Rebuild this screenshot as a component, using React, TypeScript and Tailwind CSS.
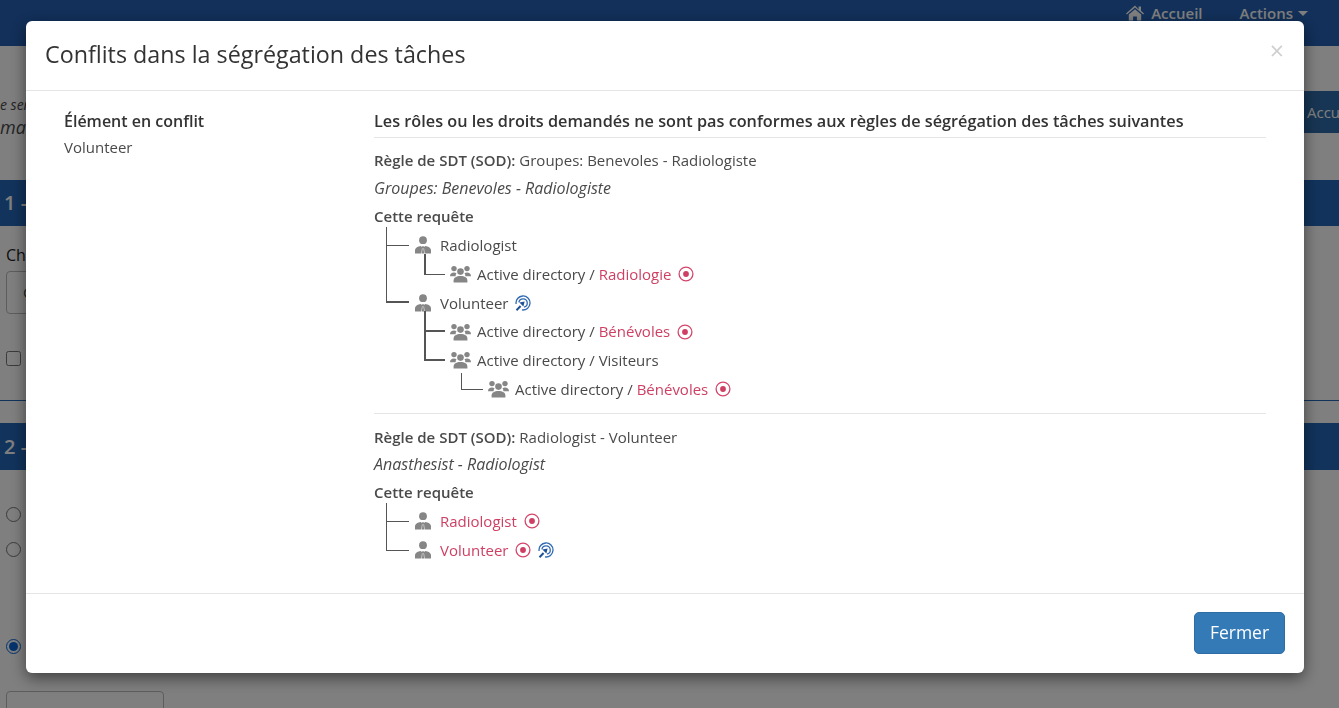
import React from 'react';

const PersonIcon = () => (
  <svg viewBox="0 0 16 18" className="w-[16px] h-[18px] shrink-0" fill="#868686">
    <circle cx="8" cy="4.2" r="3.9" />
    <path d="M0 17.5v-3.2c0-2 1.6-3.4 3.6-3.9l1.9-.5 1.6 1.2-.7 6.4H0z" />
    <path d="M16 17.5v-3.2c0-2-1.6-3.4-3.6-3.9l-1.9-.5-1.6 1.2.7 6.4H16z" />
    <path d="M7.2 10.2h1.6l.3 1.3-.5 1 .5 5h-2.2l.5-5-.5-1z" />
  </svg>
);

const GroupIcon = () => (
  <svg viewBox="0 0 21 18" className="w-[21px] h-[18px] shrink-0" fill="#868686">
    <circle cx="4" cy="3.6" r="2.7" />
    <circle cx="17" cy="3.6" r="2.7" />
    <circle cx="10.5" cy="6.6" r="3.3" />
    <path d="M0 11.2c0-2.4 1.6-3.7 4-3.7 1 0 1.8.2 2.5.7-.6.8-.9 1.7-.9 3H0z" />
    <path d="M21 11.2c0-2.4-1.6-3.7-4-3.7-1 0-1.8.2-2.5.7.6.8.9 1.7.9 3H21z" />
    <path d="M3.6 17.6v-2c0-3 2.8-4.6 6.9-4.6s6.9 1.6 6.9 4.6v2z" />
  </svg>
);

const TargetIcon = () => (
  <svg viewBox="0 0 16 16" className="w-[16px] h-[16px] shrink-0">
    <circle cx="8" cy="8" r="6.9" fill="none" stroke="#d5446a" strokeWidth="1.3" />
    <circle cx="8" cy="8" r="2.9" fill="#cf3f63" />
  </svg>
);

const ScopeIcon = () => (
  <svg viewBox="0 0 16 16" className="w-[16px] h-[16px] shrink-0" fill="none">
    <path d="M1.1 9A7 7 0 1 1 7 14.9" stroke="#2f69b3" strokeWidth="1.3" />
    <path d="M3.9 7.400A4.200 4.200 0 1 1 9 12.100" stroke="#2f69b3" strokeWidth="1.300" />
    <path d="M1.500 15.200 5.600 11" stroke="#1f5196" strokeWidth="2" />
    <path d="M9.600 6.400 4.400 7.600 8.400 11.600z" fill="#1f5196" />
  </svg>
);

const HomeIcon = () => (
  <svg viewBox="0 0 18 16" className="w-[18px] h-[16px]" fill="#ffffff">
    <path d="M9 .6 0 8.400l.9 1L9 2.600l8.100 6.800.9-1-3-2.600V1.500h-2.400v3.100z" />
    <path d="M2.800 9.400 9 4.200l6.200 5.200v6.200h-4.300v-4.200H7.100v4.200H2.800z" />
  </svg>
);

const Red = ({ children }: { children: React.ReactNode }) => (
  <span className="text-[#cf3f63]">{children}</span>
);

type RowProps = {
  pad: string;
  line: string;
  group?: boolean;
  children: React.ReactNode;
};

// line = classes of the elbow connector drawn to the left of the icon
const TreeRow = ({ pad, line, group, children }: RowProps) => (
  <div className={`relative h-[28.75px] flex items-center ${pad}`}>
    <span className={`absolute border-[#555] ${line}`} />
    {group ? <GroupIcon /> : <PersonIcon />}
    <span className={`flex items-center gap-[7px] whitespace-nowrap ${group ? 'ml-[6px]' : 'ml-[9px]'}`}>
      {children}
    </span>
  </div>
);

const Heading = ({ children }: { children: React.ReactNode }) => (
  <div className="font-semibold leading-[20px]">{children}</div>
);

export default function App() {
  return (
    <div className="relative h-screen overflow-hidden bg-white text-[15px] text-[#4a4a4a]" style={{ fontFamily: '"Open Sans", sans-serif' }}>
      {/* ——— Page behind the dialog ——— */}
      <div className="h-[46px] bg-[#2460b4] flex items-start justify-end pt-[3px] pr-[31px] font-semibold text-white">
        <div className="flex items-center gap-[7px] leading-[20px] mr-[37px]">
          <HomeIcon />
          Accueil
        </div>
        <div className="flex items-center gap-[5px] leading-[20px]">
          Actions
          <span className="w-0 h-0 border-x-[5px] border-x-transparent border-t-[5px] border-t-white" />
        </div>
      </div>

      <div className="flex justify-between pt-[45px] h-[134px]">
        <div className="italic whitespace-nowrap pt-[4px]">
          <div className="text-[14px] leading-[20px]">e service</div>
          <div className="text-[18px] leading-[24px]">mande</div>
        </div>
        <div className="h-[42px] w-[36px] bg-[#2f6ba8] text-white leading-[42px] pl-[4px] whitespace-nowrap shrink-0">
          Accu
        </div>
      </div>

      <div className="h-[46px] bg-[#2466b8] text-white text-[20px] font-semibold leading-[46px] pl-[4px]">1 - Demande</div>
      <div className="px-[6px] h-[175px] border-b border-[#2466b8]">
        <div className="pt-[18px] text-[16px] leading-[22px] font-medium text-[#222]">Choisir</div>
        <div className="mt-[5px] w-[158px] h-[43px] border border-[#bbb] rounded-[4px] pl-[16px] leading-[41px]">Choix</div>
        <input type="checkbox" className="block mt-[37px] w-[15px] h-[15px]" readOnly />
      </div>

      <div className="mt-[22px] h-[47px] bg-[#2466b8] text-white text-[20px] font-semibold leading-[47px] pl-[4px]">2 - Options</div>
      <div className="px-[6px]">
        <input type="radio" className="block mt-[37px] w-[15px] h-[15px]" readOnly />
        <input type="radio" className="block mt-[20px] w-[15px] h-[15px]" readOnly />
        <input type="radio" checked className="block mt-[82px] w-[15px] h-[15px] accent-[#0a66d8]" readOnly />
        <div className="mt-[37px] w-[158px] h-[43px] border border-[#bbb] rounded-[4px]" />
      </div>

      {/* ——— Backdrop ——— */}
      <div className="fixed inset-0 bg-black/50" />

      {/* ——— Dialog ——— */}
      <div className="fixed left-[26px] top-[21px] w-[1278px] h-[652px] flex flex-col bg-white rounded-[6px] shadow-[0_5px_15px_rgba(0,0,0,0.5)]">
        <div className="h-[70px] shrink-0 flex items-center justify-between pl-[19px] pr-[20px] pb-[3px] border-b border-[#e5e5e5]">
          <h4 className="text-[23.3px] font-medium leading-[30px] text-[#333]">Conflits dans la ségrégation des tâches</h4>
          <span className="text-[25px] font-normal leading-none text-[#cfcfcf] -mt-[8px]">×</span>
        </div>

        <div className="flex-1 flex pl-[38px] pr-[38px] pt-[19px]">
          <div className="w-[310px] shrink-0">
            <div className="text-[16px] font-semibold leading-[22px] text-[#333]">Élément en conflit</div>
            <div className="mt-[5px] leading-[20px]">Volunteer</div>
          </div>

          <div className="flex-1">
            <div className="text-[16.25px] font-semibold leading-[22px] pb-[5px] border-b border-[#e5e5e5] text-[#333]">
              Les rôles ou les droits demandés ne sont pas conformes aux règles de ségrégation des tâches suivantes
            </div>

            <div className="mt-[12px] leading-[20px]">
              <span className="font-semibold">Règle de SDT (SOD):</span> Groupes: Benevoles - Radiologiste
            </div>
            <div className="mt-[8px] text-[16px] italic leading-[20px]">Groupes: Benevoles - Radiologiste</div>
            <div className="mt-[8px]"><Heading>Cette requête</Heading></div>
            <div className="mt-[5px]">
              <TreeRow pad="pl-[41px]" line="left-[12px] bottom-[14px] w-[23px] h-[19px] border-l border-b">
                Radiologist
              </TreeRow>
              <TreeRow pad="pl-[76px]" group line="left-[50px] bottom-[14px] w-[21px] h-[21px] border-l-2 border-b">
                <span>Active directory / <Red>Radiologie</Red></span>
                <TargetIcon />
              </TreeRow>
              <TreeRow pad="pl-[41px]" line="left-[12px] bottom-[14px] w-[23px] h-[58px] border-l border-b-2">
                Volunteer
                <ScopeIcon />
              </TreeRow>
              <TreeRow pad="pl-[76px]" group line="left-[50px] bottom-[14px] w-[21px] h-[21px] border-l-2 border-b-2">
                <span>Active directory / <Red>Bénévoles</Red></span>
                <TargetIcon />
              </TreeRow>
              <TreeRow pad="pl-[76px]" group line="left-[50px] bottom-[14px] w-[21px] h-[29px] border-l-2 border-b-2">
                <span>Active directory / Visiteurs</span>
              </TreeRow>
              <TreeRow pad="pl-[114px]" group line="left-[87px] bottom-[14px] w-[22px] h-[17px] border-l border-b">
                <span>Active directory / <Red>Bénévoles</Red></span>
                <TargetIcon />
              </TreeRow>
            </div>

            <div className="mt-[9.5px] border-t border-[#e5e5e5]" />

            <div className="mt-[13px] leading-[20px]">
              <span className="font-semibold">Règle de SDT (SOD):</span> Radiologist - Volunteer
            </div>
            <div className="mt-[7px] text-[16px] italic leading-[20px]">Anasthesist - Radiologist</div>
            <div className="mt-[8px]"><Heading>Cette requête</Heading></div>
            <div className="mt-[5px]">
              <TreeRow pad="pl-[41px]" line="left-[12px] bottom-[14px] w-[23px] h-[19px] border-l border-b">
                <Red>Radiologist</Red>
                <TargetIcon />
              </TreeRow>
              <TreeRow pad="pl-[41px]" line="left-[12px] bottom-[14px] w-[23px] h-[29px] border-l border-b">
                <Red>Volunteer</Red>
                <TargetIcon />
                <ScopeIcon />
              </TreeRow>
            </div>
          </div>
        </div>

        <div className="h-[80px] shrink-0 flex items-center justify-end pr-[19px] pb-[2px] border-t border-[#e5e5e5]">
          <button className="w-[91px] h-[42px] rounded-[5px] bg-[#337ab7] border border-[#2e6da4] text-white text-[17.5px] font-medium">
            Fermer
          </button>
        </div>
      </div>
    </div>
  );
}
